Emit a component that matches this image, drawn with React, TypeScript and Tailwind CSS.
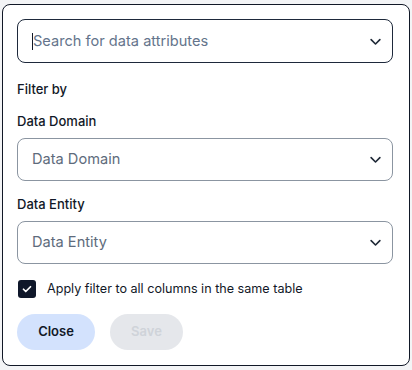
import React from "react";

function Chevron() {
  return (
    <svg width="15" height="15" viewBox="0 0 24 24" fill="none" stroke="#1f2937" strokeWidth="2.6" strokeLinecap="round" strokeLinejoin="round">
      <path d="M5 9l7 7 7-7" />
    </svg>
  );
}

export default function App() {
  return (
    <div className="w-[412px] h-[370px] bg-[#f3f4f6] pt-[4px] pl-[2px]" style={{ fontFamily: "Inter, 'Noto Sans', sans-serif" }}>
      <div className="w-[408px] h-[362px] bg-white border border-[#111827] rounded-lg pl-[14px] pr-[16px] pt-[14px]">
        <div className="h-[44px] border border-[#1e293b] rounded-lg flex items-center pl-[14px] pr-[9px]">
          <span className="w-px h-[17px] bg-[#111827]"></span>
          <span className="flex-1 text-[14.6px] text-[#64748b] pt-px">Search for data attributes</span>
          <Chevron />
        </div>
        <div className="mt-[18px] text-[13px] font-medium text-[#111827] leading-[16px]">Filter by</div>
        <div className="mt-[16px] text-[13px] font-medium text-[#111827] leading-[16px]">Data Domain</div>
        <div className="mt-[9px] h-[43px] border border-[#8b95a1] rounded-lg flex items-center pl-[14px] pr-[9px]">
          <span className="flex-1 text-[14.6px] text-[#5e6b7c]">Data Domain</span>
          <Chevron />
        </div>
        <div className="mt-[15px] text-[13px] font-medium text-[#111827] leading-[16px]">Data Entity</div>
        <div className="mt-[9px] h-[43px] border border-[#8b95a1] rounded-lg flex items-center pl-[14px] pr-[9px]">
          <span className="flex-1 text-[14.6px] text-[#5e6b7c]">Data Entity</span>
          <Chevron />
        </div>
        <div className="mt-[16px] flex items-center gap-[11px] pl-px">
          <div className="w-[18px] h-[18px] rounded-[3px] bg-[#0f172a] flex items-center justify-center">
            <svg width="12" height="12" viewBox="0 0 24 24" fill="none" stroke="white" strokeWidth="3.5" strokeLinecap="round" strokeLinejoin="round">
              <path d="M5 12.5l4.5 4.5L19 7.5" />
            </svg>
          </div>
          <span className="text-[12.6px] text-[#111827]">Apply filter to all columns in the same table</span>
        </div>
        <div className="mt-[15px] flex gap-[15px]">
          <button className="w-[78px] h-[36px] rounded-full bg-[#d3e2fd] text-[13px] font-semibold text-[#111827]">Close</button>
          <button className="w-[73px] h-[36px] rounded-full bg-[#e5e7eb] text-[13px] font-semibold text-[#cfd3d9]">Save</button>
        </div>
      </div>
    </div>
  );
}
